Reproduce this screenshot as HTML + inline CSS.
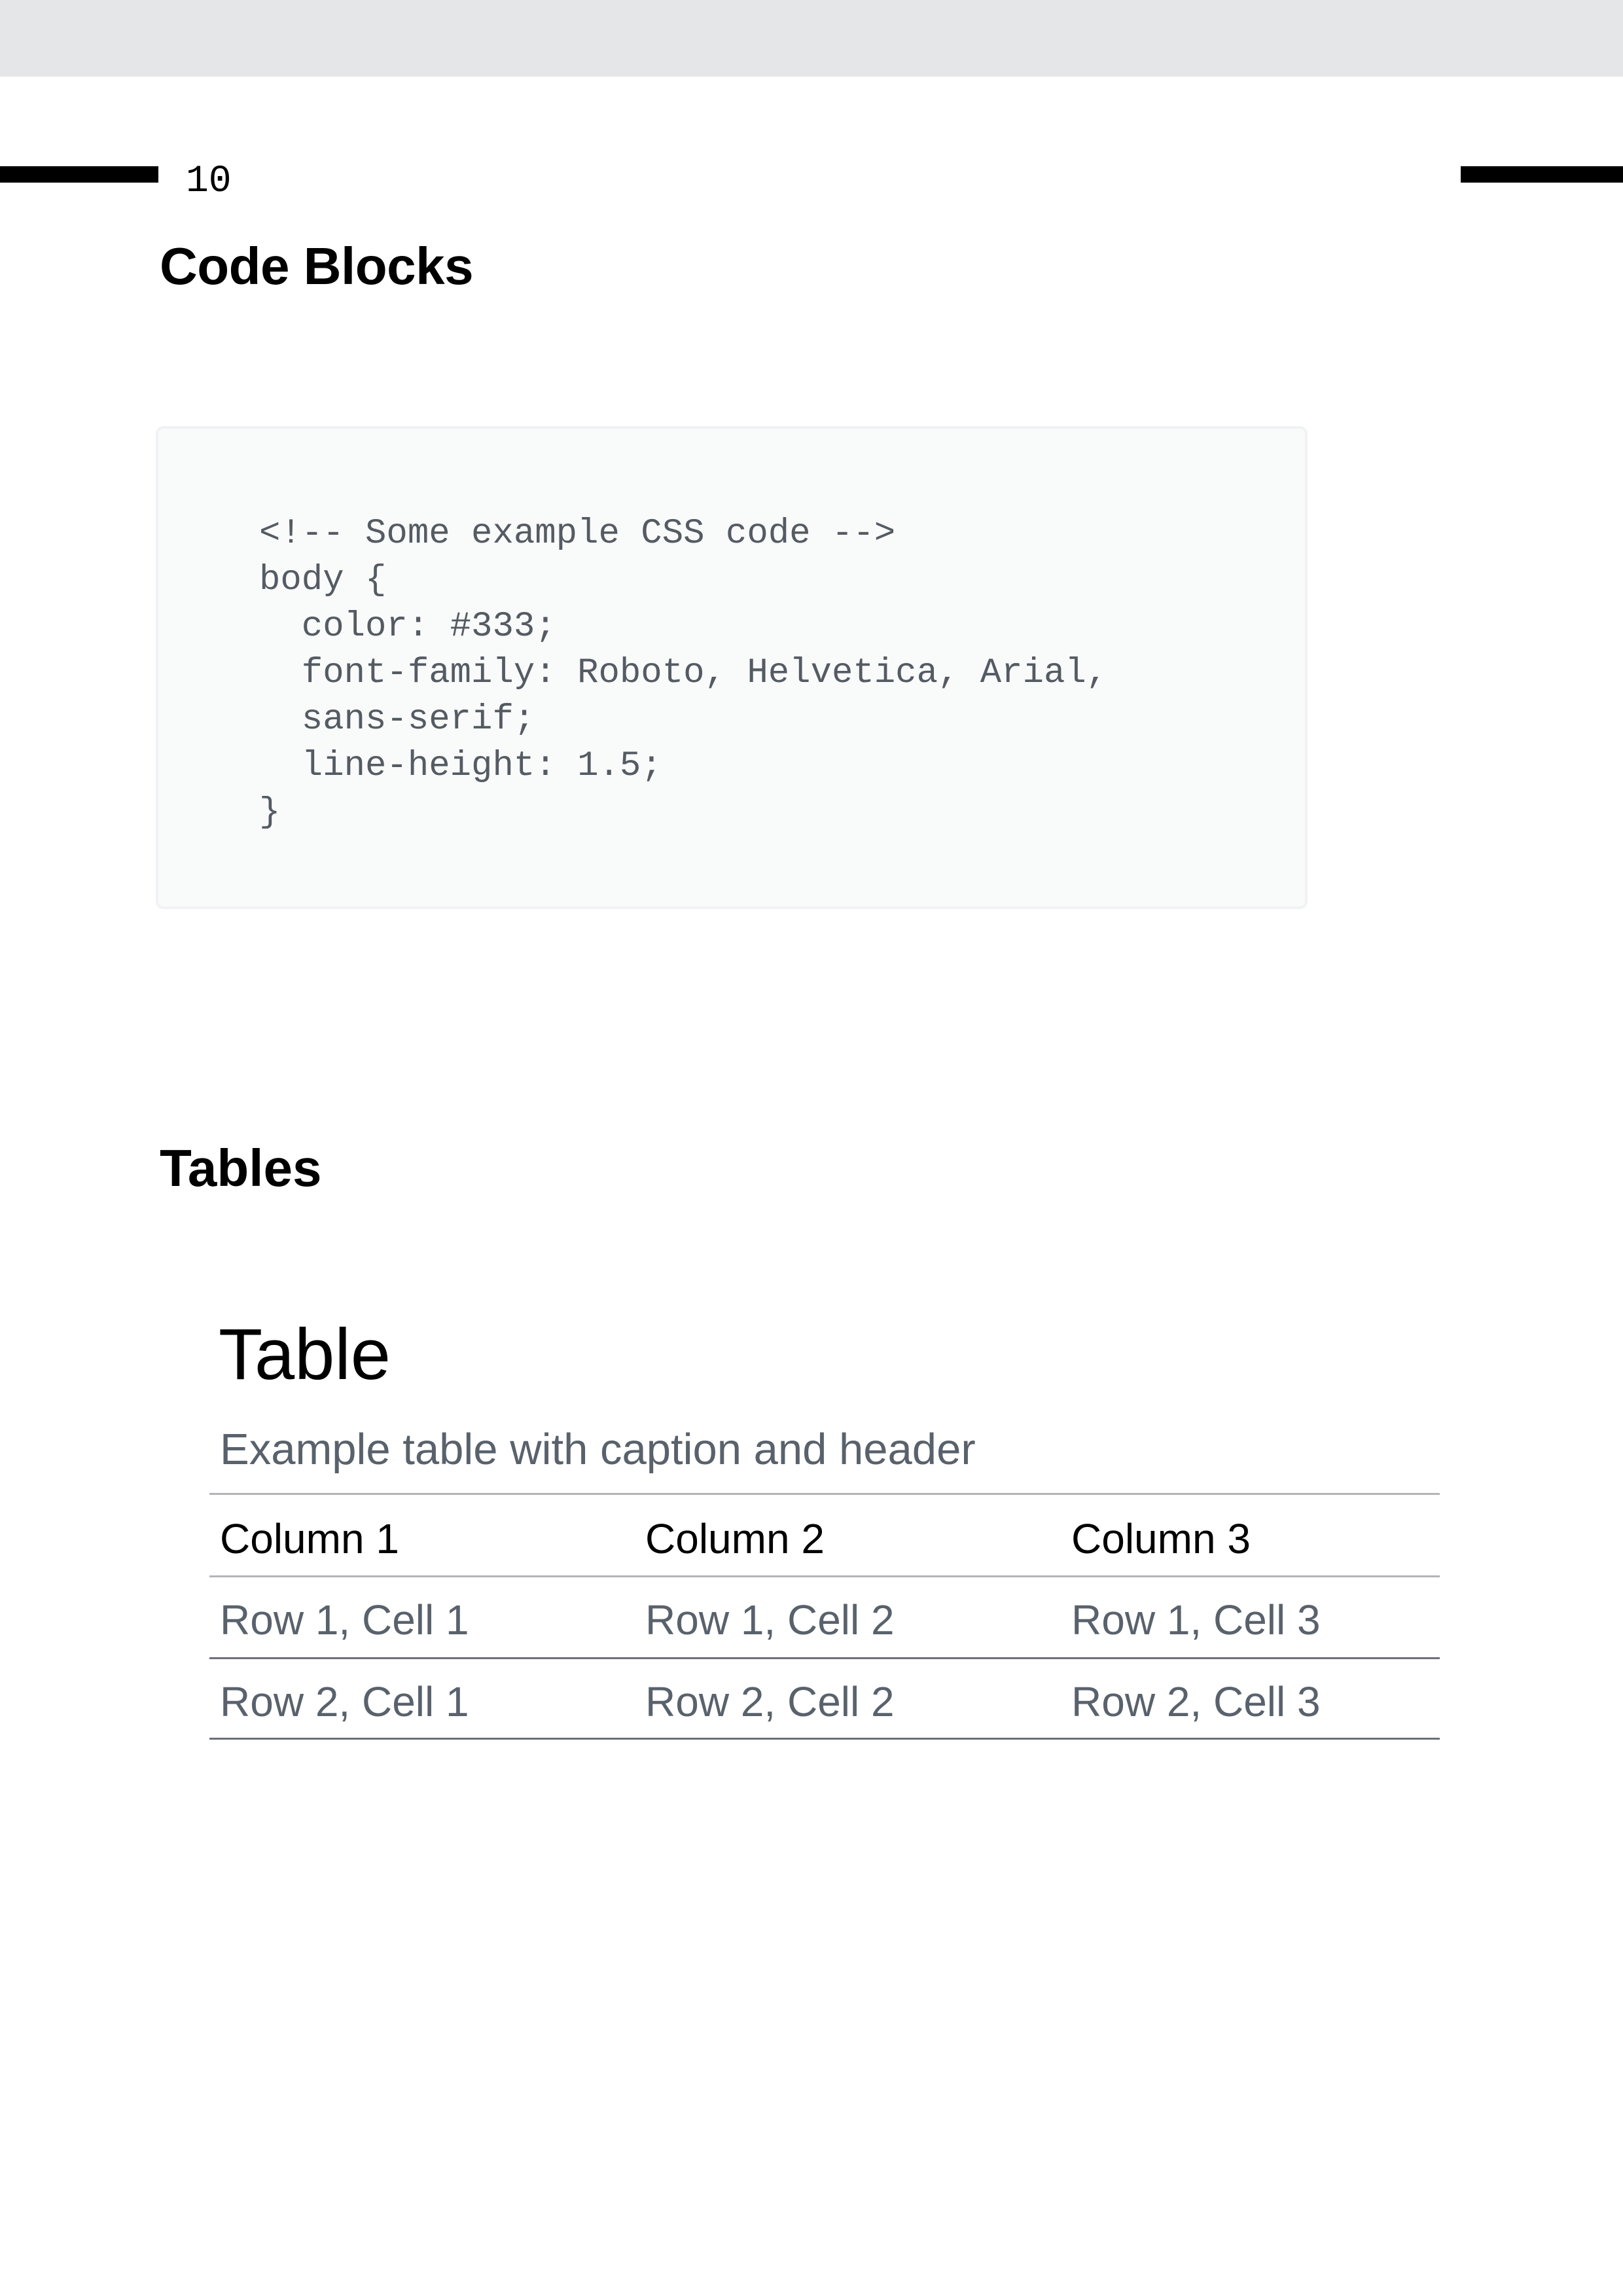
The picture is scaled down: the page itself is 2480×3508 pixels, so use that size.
<!DOCTYPE html>
<html><head><meta charset="utf-8"><style>
html,body{margin:0;padding:0;background:#fff;}
body{width:2480px;height:3508px;position:relative;overflow:hidden;font-family:"Liberation Sans",sans-serif;}
.a{position:absolute;white-space:pre;line-height:1;}
.hdr{position:absolute;left:0;top:0;width:2480px;height:117px;background:#e5e6e8;}
.bar{position:absolute;top:254px;height:25px;background:#000;}
.h2{font-weight:bold;font-size:80px;color:#000;}
.code{position:absolute;left:238px;top:651px;width:1760px;height:738px;background:#f9fafa;border:4px solid #f1f2f4;border-radius:12px;box-sizing:border-box;}
.mono{font-family:"Liberation Mono",monospace;font-size:54px;color:#555b63;line-height:71px;}
.ln{position:absolute;left:320px;width:1880px;height:3px;}
.cell{font-size:64px;color:#59626c;}
.th{font-size:64px;color:#000;}
</style></head><body>
<div class="hdr"></div>
<div class="bar" style="left:0;width:242px"></div>
<div class="bar" style="left:2232px;width:248px"></div>
<div class="a" style="left:284px;top:249px;font-family:'Liberation Mono',monospace;font-size:58px;color:#000;">10</div>
<div class="a h2" style="left:244px;top:367px;letter-spacing:-0.5px;">Code Blocks</div>
<div class="code"></div>
<div class="a mono" style="left:396px;top:780px;">&lt;!-- Some example CSS code --&gt;
body {
  color: #333;
  font-family: Roboto, Helvetica, Arial,
  sans-serif;
  line-height: 1.5;
}</div>
<div class="a h2" style="left:244px;top:1745px;">Tables</div>
<div class="a" style="left:334px;top:2015px;font-size:110px;color:#000;">Table</div>
<div class="a" style="left:336px;top:2181px;font-size:67px;color:#59626c;">Example table with caption and header</div>
<div class="ln" style="top:2281px;background:#b3b4b7"></div>
<div class="a th" style="left:336px;top:2319px;">Column 1</div>
<div class="a th" style="left:986px;top:2319px;">Column 2</div>
<div class="a th" style="left:1637px;top:2319px;">Column 3</div>
<div class="ln" style="top:2407px;background:#b3b4b7"></div>
<div class="a cell" style="left:336px;top:2443px;">Row 1, Cell 1</div>
<div class="a cell" style="left:986px;top:2443px;">Row 1, Cell 2</div>
<div class="a cell" style="left:1637px;top:2443px;">Row 1, Cell 3</div>
<div class="ln" style="top:2532px;background:#6b7078"></div>
<div class="a cell" style="left:336px;top:2568px;">Row 2, Cell 1</div>
<div class="a cell" style="left:986px;top:2568px;">Row 2, Cell 2</div>
<div class="a cell" style="left:1637px;top:2568px;">Row 2, Cell 3</div>
<div class="ln" style="top:2655px;background:#6b7078"></div>
</body></html>
